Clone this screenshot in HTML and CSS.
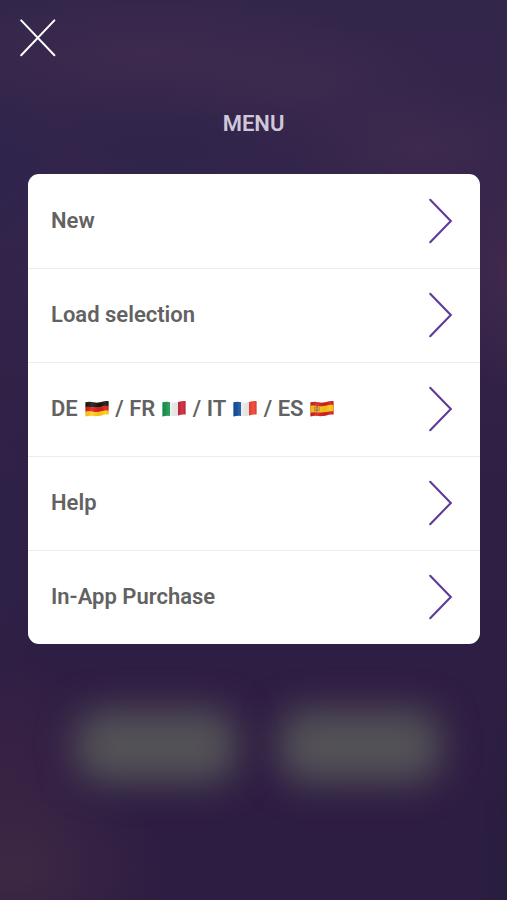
FILE: index.html
```html
<!DOCTYPE html>
<html lang="en">
<head>
<meta charset="utf-8">
<title>Menu</title>
<link rel="stylesheet" href="styles.css">
</head>
<body>
<svg class="defs" width="0" height="0" aria-hidden="true">
  <defs>
    <symbol id="chevron" viewBox="0 0 26 48"><path d="M3.2 2.8 23.8 24 3.2 45.2" fill="none" stroke="#5f3b9b" stroke-width="2.1" stroke-linecap="round" stroke-linejoin="miter"/></symbol>
    <clipPath id="wave"><path d="M.4 2.2C7 .6 9 3 13 2.6S19 .4 23.6 1.2V14.6C19 13.8 17 15.4 13 16S6 15 .4 16.6Z"/></clipPath>
    <linearGradient id="fold" x1="0" x2="1" y1="0" y2="0">
      <stop offset="0" stop-color="#000" stop-opacity=".08"/>
      <stop offset=".3" stop-color="#fff" stop-opacity=".12"/>
      <stop offset=".62" stop-color="#000" stop-opacity=".06"/>
      <stop offset=".85" stop-color="#fff" stop-opacity=".1"/>
      <stop offset="1" stop-color="#000" stop-opacity=".1"/>
    </linearGradient>
  </defs>
</svg>
<main class="screen">
  <div class="glow glow-left"></div>
  <div class="glow glow-right"></div>
  <header class="top">
    <svg class="close" viewBox="0 0 38 40"><path d="M2.2 2.4 35.4 37.2M35.4 2.4 2.2 37.2" fill="none" stroke="#fff" stroke-width="2" stroke-linecap="round"/></svg>
  </header>
  <h1 class="title">MENU</h1>
  <nav class="card">
    <a class="row"><span>New</span><svg class="chevron"><use href="#chevron"/></svg></a>
    <a class="row"><span>Load selection</span><svg class="chevron"><use href="#chevron"/></svg></a>
    <a class="row"><span class="langs">
      <span>DE</span>
      <svg class="flag" viewBox="0 0 24 17"><g clip-path="url(#wave)"><path fill="#191512" d="M0 0h24v6.2C18 5.4 17 7.6 12 7.8S6 6.2 0 7.4Z"/><path fill="#e01b12" d="M0 7.2C6 6 7 7.8 12 7.6S18 5.2 24 6v5C18 10.2 17 12 12 12.2S6 10.8 0 12Z"/><path fill="#ffce13" d="M0 12C6 10.8 7 12.4 12 12.2S18 10 24 10.8V17H0Z"/><path fill="url(#fold)" d="M0 0h24v17H0z"/></g></svg>
      <span>/ FR</span>
      <svg class="flag" viewBox="0 0 24 17"><g clip-path="url(#wave)"><path fill="#17934b" d="M0 0h8v17H0z"/><path fill="#f2f2f2" d="M8 0h8v17H8z"/><path fill="#c72637" d="M16 0h8v17h-8z"/><path fill="url(#fold)" d="M0 0h24v17H0z"/></g></svg>
      <span>/ IT</span>
      <svg class="flag" viewBox="0 0 24 17"><g clip-path="url(#wave)"><path fill="#104e9c" d="M0 0h8v17H0z"/><path fill="#f2f2f2" d="M8 0h8v17H8z"/><path fill="#ee3e31" d="M16 0h8v17h-8z"/><path fill="url(#fold)" d="M0 0h24v17H0z"/></g></svg>
      <span>/ ES</span>
      <svg class="flag" viewBox="0 0 24 17"><g clip-path="url(#wave)"><path fill="#d21f1b" d="M0 0h24v17H0z"/><path fill="#fcc516" d="M0 5.8C6 4.6 7 6.4 12 6.2S18 4.2 24 5v6.4C18 10.6 17 12.4 12 12.6S6 11.6 0 13Z"/><path fill="#a9572a" d="M4.4 6.6h.8v5h-.8zM8.6 6.8h.8v4.8h-.8zM5.8 6.4q1.1-1.4 2.2 0v4.6q-1.1 1.6-2.2 0Z"/><path fill="#c9a48c" d="M6.3 7.6h1.2v1.6H6.3z"/><path fill="url(#fold)" d="M0 0h24v17H0z"/></g></svg>
    </span><svg class="chevron"><use href="#chevron"/></svg></a>
    <a class="row"><span>Help</span><svg class="chevron"><use href="#chevron"/></svg></a>
    <a class="row"><span>In-App Purchase</span><svg class="chevron"><use href="#chevron"/></svg></a>
  </nav>
</main>
</body>
</html>
```

FILE: styles.css
```css
* { box-sizing: border-box; }
body {
  margin: 0;
  font-family: Roboto, "Liberation Sans", sans-serif;
}
.defs { position: absolute; }
.screen {
  position: relative;
  height: 900px;
  overflow: hidden;
  background:
    radial-gradient(ellipse 150px 100px at 15px 870px, rgba(63, 41, 68, .9), transparent),
    radial-gradient(ellipse 100px 120px at 5px 775px, rgba(60, 36, 68, .8), transparent),
    radial-gradient(ellipse 50px 200px at 520px 860px, rgba(35, 30, 62, .9), transparent),
    radial-gradient(ellipse 60px 120px at 507px 270px, rgba(66, 43, 76, .8), transparent),
    radial-gradient(ellipse 130px 60px at 420px 145px, rgba(65, 45, 79, .7), transparent),
    radial-gradient(ellipse 150px 60px at 310px 85px, rgba(65, 44, 80, .6), transparent),
    radial-gradient(ellipse 240px 65px at 150px 55px, rgba(64, 43, 79, .8), transparent),
    radial-gradient(ellipse 180px 60px at 160px 150px, rgba(46, 36, 75, .7), transparent),
    radial-gradient(ellipse 60px 100px at 0 175px, rgba(44, 37, 77, .8), transparent),
    radial-gradient(ellipse 40px 160px at 0 540px, rgba(43, 35, 75, .6), transparent),
    linear-gradient(#33264b 0, #35244b 200px, #301f45 500px, #2e1d42 900px);
}
.glow {
  position: absolute;
  top: 710px;
  height: 72px;
  border-radius: 24px;
  background: #545357;
  filter: blur(18px);
}
.glow-left { left: 76px; width: 160px; }
.glow-right { left: 280px; width: 160px; }
.top {
  position: relative;
  height: 108px;
  padding: 18px 0 0 19px;
}
.close { display: block; width: 38px; height: 40px; }
.title {
  position: relative;
  margin: 0;
  height: 66px;
  font-size: 22px;
  line-height: 32px;
  font-weight: 600;
  text-align: center;
  color: #d0c8d8;
}
.card {
  position: relative;
  width: 452px;
  margin: 0 27px 0 28px;
  border-radius: 11px;
  background: #fff;
}
.row {
  display: flex;
  align-items: center;
  justify-content: space-between;
  height: 94px;
  padding: 0 27px 1px 23px;
  font-size: 22px;
  font-weight: 600;
  color: #626262;
}
.row + .row { border-top: 1px solid #ebebf1; padding-bottom: 2px; }
.langs { display: flex; align-items: center; gap: 6.8px; }
.flag { width: 24px; height: 17px; }
.chevron { width: 26px; height: 48px; }
```
